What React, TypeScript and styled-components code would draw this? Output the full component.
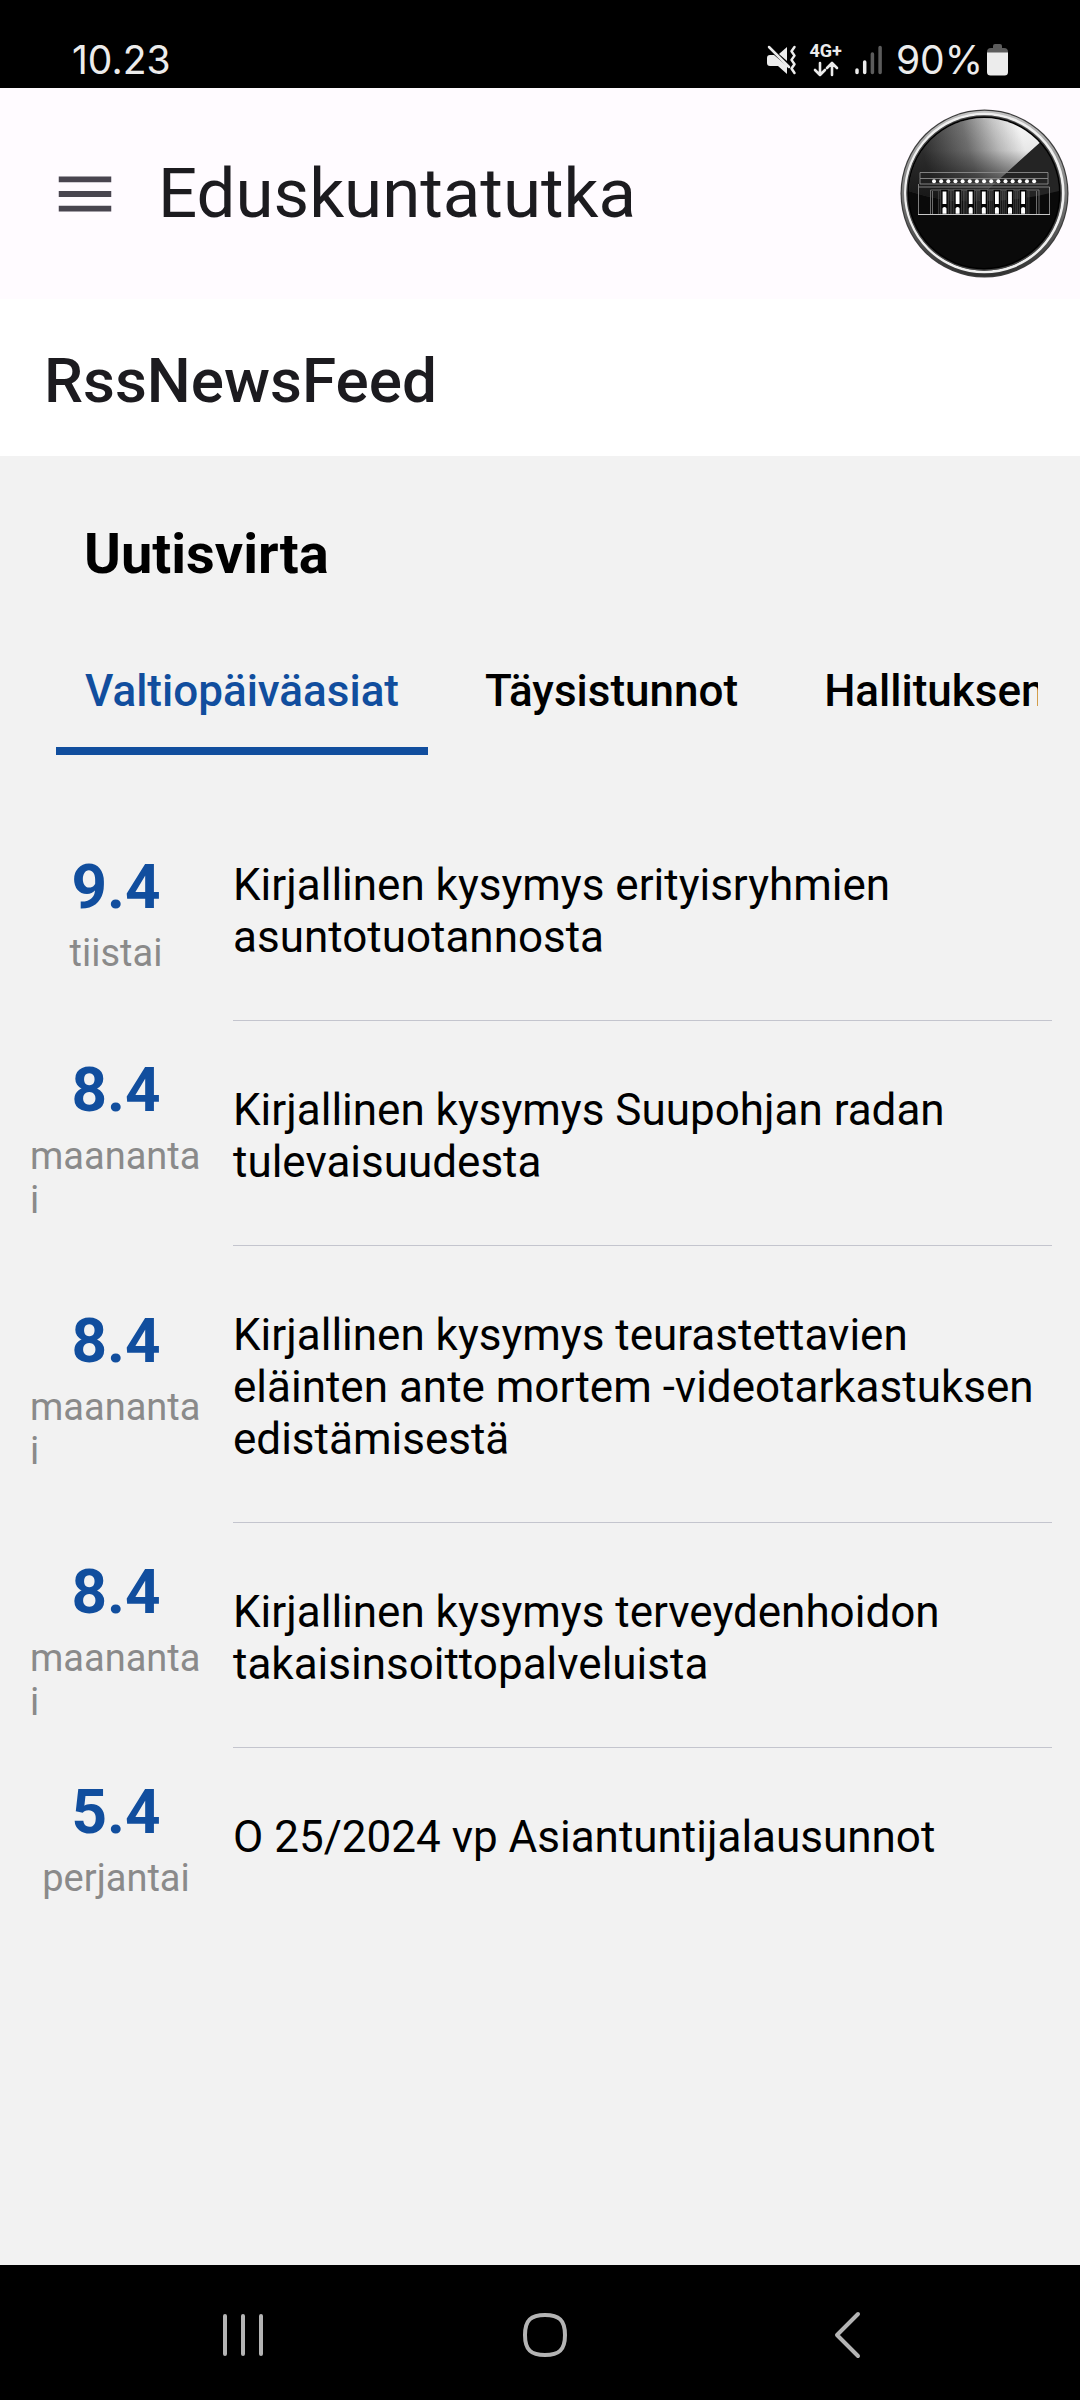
import React, { useState } from "react";
import styled, { createGlobalStyle } from "styled-components";

const GlobalStyle = createGlobalStyle`
  *, *::before, *::after { box-sizing: border-box; }
  body { margin: 0; background: #000; }
  h1, h2, h3, p, ul { margin: 0; padding: 0; }
  button { border: 0; padding: 0; background: none; font: inherit; color: inherit; cursor: pointer; }
  svg { display: block; flex: none; }
`;

const Screen = styled.div`
  display: flex;
  flex-direction: column;
  min-height: 100vh;
  background: #f2f2f2;
  color: #000;
  font-family: Roboto, "Liberation Sans", sans-serif;
`;

const StatusBar = styled.div`
  display: flex;
  align-items: center;
  justify-content: space-between;
  height: 88px;
  padding: 32px 72px 0;
  background: #000;
  color: #ececec;
  font-family: Inter, Roboto, sans-serif;
  font-size: 39px;
  line-height: 56px;
`;

const StatusIcons = styled.div`
  display: flex;
  align-items: center;
  gap: 13px;
`;

const Network = styled.div`
  display: flex;
  flex-direction: column;
  align-items: center;
  gap: 2px;
  font-family: Roboto, sans-serif;
  font-size: 18px;
  font-weight: 700;
  line-height: 16px;
`;

const BatteryLevel = styled.div`
  display: flex;
  align-items: center;
  gap: 4px;
`;

const AppBar = styled.header`
  display: flex;
  align-items: center;
  gap: 38px;
  height: 211px;
  padding: 0 11px 0 50px;
  background: #fffbff;
  color: #1c1b1f;
`;

const MenuButton = styled.button`
  display: flex;
  color: #49454f;
`;

const AppTitle = styled.h1`
  flex: 1;
  font-size: 69px;
  font-weight: 400;
  line-height: 80px;
`;

const PageHeader = styled.div`
  height: 157px;
  padding: 45px 44px 0;
  background: #fff;
`;

const PageTitle = styled.h2`
  color: #1c1b1f;
  font-size: 62px;
  font-weight: 500;
  line-height: 74px;
`;

const Feed = styled.main`
  flex: 1;
  padding-top: 65px;
`;

const FeedTitle = styled.h3`
  padding: 0 84px;
  font-size: 56px;
  font-weight: 700;
  line-height: 66px;
`;

const Tabs = styled.div`
  display: flex;
  gap: 28px;
  margin: 48px 42px 0 56px;
  overflow: hidden;
`;

const Tab = styled.button<{ $active: boolean }>`
  flex: none;
  padding: 30px 29px;
  border-bottom: 8px solid ${(p) => (p.$active ? "#114e9e" : "transparent")};
  color: ${(p) => (p.$active ? "#114e9e" : "#000")};
  font-size: 44px;
  font-weight: 500;
  line-height: 52px;
  white-space: nowrap;
`;

const NewsList = styled.ul`
  display: flex;
  flex-direction: column;
  padding: 41px 28px 0;
  list-style: none;
`;

const NewsItem = styled.li`
  display: grid;
  grid-template-columns: 176px 1fr;
  gap: 29px;

  &:not(:last-child) > p {
    border-bottom: 1px solid #c4c5ce;
  }
`;

const DateColumn = styled.div`
  display: flex;
  flex-direction: column;
  align-items: center;
  justify-content: center;
  padding: 0 2px;
`;

const DateNumber = styled.span`
  color: #114e9e;
  font-size: 62px;
  font-weight: 700;
  line-height: 88px;
`;

const Weekday = styled.span`
  color: #8a8a8a;
  font-size: 38px;
  line-height: 44px;
  overflow-wrap: anywhere;
`;

const Headline = styled.p`
  padding: 63px 0 57px;
  font-size: 44px;
  line-height: 52px;
`;

const NavBar = styled.nav`
  display: grid;
  grid-template-columns: repeat(3, 1fr);
  height: 135px;
  padding: 5px 82px 0 92px;
  background: #000;
  color: #b4b4b4;
`;

const NavButton = styled.button`
  display: flex;
  align-items: center;
  justify-content: center;
`;

const MutedIcon = () => (
  <svg width="31" height="32" viewBox="0 0 31 32" aria-hidden="true">
    <path d="M1 14q0-3 3-3h4l13 11v8L12 22H4q-3 0-3-3z" fill="#ececec" />
    <path d="M13 10l8-7v14z" fill="#ececec" />
    <path d="M3 3l20 20" stroke="#ececec" strokeWidth="2.500" strokeLinecap="round" />
    <path d="M28.500 3l-3 4.300 3 4.300-3 4.300 3 4.300-3 4.300 3 4.500" fill="none" stroke="#ececec" strokeWidth="2.500" strokeLinecap="round" strokeLinejoin="round" />
  </svg>
);

const DataArrowsIcon = () => (
  <svg width="26" height="16" viewBox="0 0 26 16" fill="none" stroke="#ececec" strokeWidth="2.600" strokeLinecap="round" strokeLinejoin="round" aria-hidden="true">
    <path d="M7 2v12M2 9l5 5 5-5M19 14V2M14 7l5-5 5 5" />
  </svg>
);

const SignalIcon = () => (
  <svg width="28" height="30" viewBox="0 0 28 30" strokeWidth="3.500" strokeLinecap="round" aria-hidden="true">
    <path d="M2 25v2.500M9.700 17v10.500" stroke="#ececec" />
    <path d="M17.400 9v18.500M25.100 2.500v25" stroke="#5c5c5c" />
  </svg>
);

const BatteryIcon = () => (
  <svg width="21" height="32" viewBox="0 0 21 32" aria-hidden="true">
    <path d="M6 4V2q0-2 2-2h5q2 0 2 2v2h2q4 0 4 4v4H0V8q0-4 4-4z" fill="#5c5c5c" />
    <path d="M0 8.500h21V28q0 3.500-3.500 3.500h-14Q0 31.500 0 28z" fill="#ececec" />
  </svg>
);

const windowCenters = [44.5, 57.6, 70.7, 83.8, 96.9, 110, 123.1];
const dotCenters = Array.from({ length: 15 }, (_, i) => 34 + i * 7.15);

const ParliamentLogo = () => (
  <svg width="169" height="169" viewBox="0 0 169 169" role="img" aria-label="Eduskuntatutka">
    <defs>
      <linearGradient id="bezel" x1="0" y1="0" x2="0" y2="1">
        <stop offset="0" stopColor="#c4c4c4" />
        <stop offset="0.400" stopColor="#8a8a8a" />
        <stop offset="1" stopColor="#303030" />
      </linearGradient>
      <linearGradient id="gloss" gradientUnits="userSpaceOnUse" x1="28" y1="62" x2="124" y2="36">
        <stop offset="0" stopColor="#303030" />
        <stop offset="0.450" stopColor="#757575" />
        <stop offset="0.750" stopColor="#c8c8c8" />
        <stop offset="1" stopColor="#fff" />
      </linearGradient>
      <linearGradient id="fade" x1="0" y1="0" x2="0" y2="1">
        <stop offset="0" stopColor="#151515" stopOpacity="0" />
        <stop offset="0.450" stopColor="#151515" stopOpacity="0.100" />
        <stop offset="1" stopColor="#151515" stopOpacity="0.950" />
      </linearGradient>
      <clipPath id="dial"><circle cx="84" cy="84" r="75" /></clipPath>
    </defs>
    <circle cx="84.500" cy="84.500" r="84" fill="#3c3c3c" />
    <circle cx="84.500" cy="84.500" r="82.800" fill="url(#bezel)" />
    <circle cx="84.300" cy="84" r="79" fill="none" stroke="#efefef" strokeWidth="2.600" />
    <circle cx="84" cy="84" r="77.700" fill="#444" />
    <circle cx="84" cy="84" r="76.500" fill="#000" />
    <circle cx="84" cy="84" r="75" fill="#0a0a0a" />
    <g clipPath="url(#dial)">
      <path d="M0 0h169v79Q84 105 0 79z" fill="#242424" />
      <path d="M0 0h160L139.700 33.700 86 82l-7 10Q40 94 0 79z" fill="url(#gloss)" />
      <path d="M0 0h160L139.700 33.700 86 82l-7 10Q40 94 0 79z" fill="url(#fade)" />
    </g>
    <path d="M18.500 92h131v13.500h-131z" fill="#0a0a0a" fillOpacity="0.500" />
    <g fill="none" stroke="#8c8c8c" strokeWidth="0.900">
      <path d="M20 63.500h128v6H20zM20 69.500v5.500h128v-5.500M19 78h130.500M18.500 75v30.500M149.500 78v27.500" />
      <path d="M30.500 105V81h108.500v24M32.500 105V82M136.500 105V82" stroke="#777" />
    </g>
    <path d="M18 105.500h132" stroke="#c8c8c8" />
    {windowCenters.map((x) => (
      <g key={x}>
        <path d={`M${x - 3.8} 81h7.6v24h-7.6z`} fill="#050505" />
        <path d={`M${x - 3.8} 105V80M${x + 3.8} 105V80M${x - 5.8} 105V82M${x + 5.8} 105V82`} stroke="#5a5a5a" strokeWidth="0.700" />
        <path d={`M${x - 1.9} 82.500h3.800V95h-3.800zM${x - 2} 104.800v-5.300q0-1.500 2-1.500t2 1.500v5.300z`} fill="#fff" />
      </g>
    ))}
    {dotCenters.map((x) => (
      <circle key={x} cx={x} cy="72.300" r="2" fill="#fff" />
    ))}
  </svg>
);

const tabs = ["Valtiopäiväasiat", "Täysistunnot", "Hallituksen"];

const news = [
  { date: "9.4", weekday: "tiistai", headline: "Kirjallinen kysymys erityisryhmien asuntotuotannosta" },
  { date: "8.4", weekday: "maanantai", headline: "Kirjallinen kysymys Suupohjan radan tulevaisuudesta" },
  { date: "8.4", weekday: "maanantai", headline: "Kirjallinen kysymys teurastettavien eläinten ante mortem -videotarkastuksen edistämisestä" },
  { date: "8.4", weekday: "maanantai", headline: "Kirjallinen kysymys terveydenhoidon takaisinsoittopalveluista" },
  { date: "5.4", weekday: "perjantai", headline: "O 25/2024 vp Asiantuntijalausunnot" },
];

export default function App() {
  const [active, setActive] = useState(0);

  return (
    <Screen>
      <GlobalStyle />
      <StatusBar>
        <span>10.23</span>
        <StatusIcons>
          <MutedIcon />
          <Network>
            <span>4G+</span>
            <DataArrowsIcon />
          </Network>
          <SignalIcon />
          <BatteryLevel>
            <span>90%</span>
            <BatteryIcon />
          </BatteryLevel>
        </StatusIcons>
      </StatusBar>

      <AppBar>
        <MenuButton aria-label="Valikko">
          <svg width="70" height="70" viewBox="0 0 24 24" fill="currentColor" aria-hidden="true">
            <path d="M3 18h18v-2H3v2zm0-5h18v-2H3v2zm0-7v2h18V6H3z" />
          </svg>
        </MenuButton>
        <AppTitle>Eduskuntatutka</AppTitle>
        <ParliamentLogo />
      </AppBar>

      <PageHeader>
        <PageTitle>RssNewsFeed</PageTitle>
      </PageHeader>

      <Feed>
        <FeedTitle>Uutisvirta</FeedTitle>
        <Tabs role="tablist">
          {tabs.map((label, i) => (
            <Tab key={label} role="tab" aria-selected={i === active} $active={i === active} onClick={() => setActive(i)}>
              {label}
            </Tab>
          ))}
        </Tabs>
        <NewsList>
          {news.map((item) => (
            <NewsItem key={item.headline}>
              <DateColumn>
                <DateNumber>{item.date}</DateNumber>
                <Weekday>{item.weekday}</Weekday>
              </DateColumn>
              <Headline>{item.headline}</Headline>
            </NewsItem>
          ))}
        </NewsList>
      </Feed>

      <NavBar>
        <NavButton aria-label="Viimeisimmät">
          <svg width="46" height="46" viewBox="0 0 46 46" stroke="currentColor" strokeWidth="4" strokeLinecap="round" aria-hidden="true">
            <path d="M5 4v38M23 4v38M41 4v38" />
          </svg>
        </NavButton>
        <NavButton aria-label="Koti">
          <svg width="46" height="46" viewBox="0 0 46 46" fill="none" stroke="currentColor" strokeWidth="4" aria-hidden="true">
            <path d="M23 3c14 0 20 5 20 20s-6 20-20 20S3 38 3 23 9 3 23 3z" />
          </svg>
        </NavButton>
        <NavButton aria-label="Takaisin">
          <svg width="28" height="48" viewBox="0 0 28 48" fill="none" stroke="currentColor" strokeWidth="4" strokeLinecap="round" strokeLinejoin="round" aria-hidden="true">
            <path d="M25 3L4 24l21 21" />
          </svg>
        </NavButton>
      </NavBar>
    </Screen>
  );
}
